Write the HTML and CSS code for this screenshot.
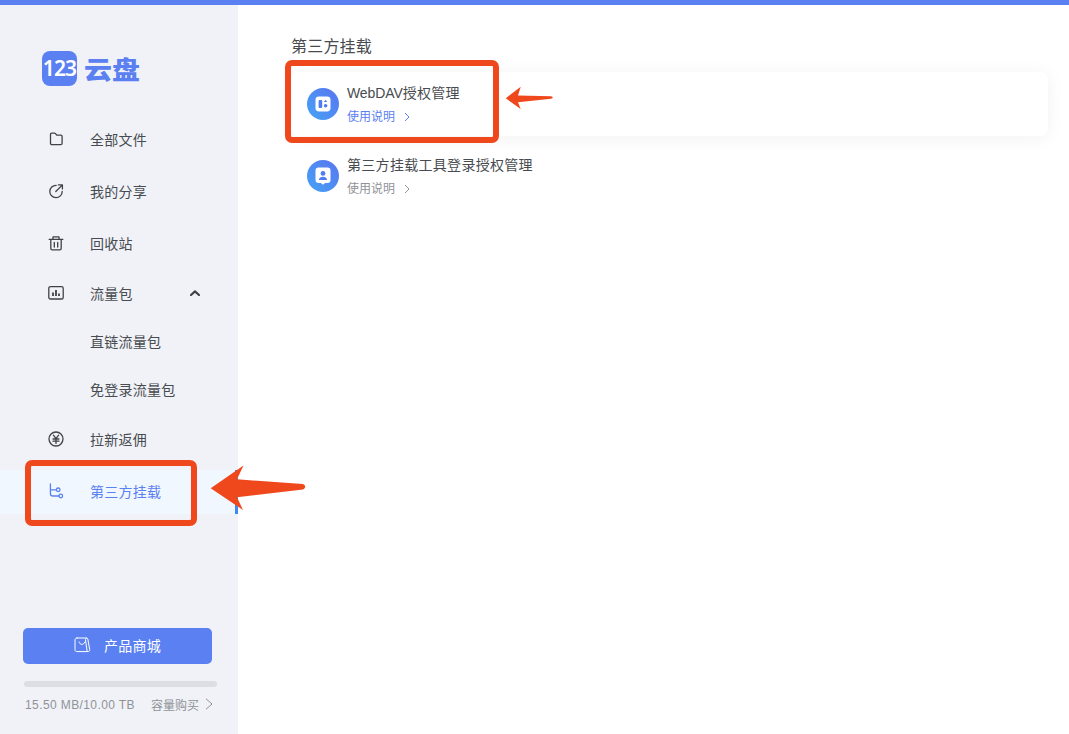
FILE: index.html
```html
<!DOCTYPE html>
<html lang="zh-CN">
<head>
    <meta charset="UTF-8">
    <title>123云盘</title>
    <link rel="stylesheet" href="styles.css">
</head>
<body>
    <div class="top-bar"></div>
    <div class="layout">
        <aside class="sidebar">
            <div class="logo">
                <span class="logo-tile">123</span>
                <span class="logo-name">云盘</span>
            </div>

            <nav class="nav">
                <a class="nav-item">
                    <svg class="nav-icon" viewBox="0 0 16 16"><path d="M2.500 3.400c0-.8.500-1.300 1.300-1.300h2.700c.4 0 .7.200 1 .5l1.200 1.500h4.100c.8 0 1.300.5 1.300 1.300v6.900c0 .8-.5 1.300-1.300 1.300H3.800c-.8 0-1.300-.5-1.300-1.300z"/></svg>
                    <span>全部文件</span>
                </a>
                <a class="nav-item">
                    <svg class="nav-icon" viewBox="0 0 16 16"><path d="M8.200 2.300a6.200 6.200 0 1 0 6 6.200M10.400 1.900h4v4M14.200 2.100L7.800 8.500"/></svg>
                    <span>我的分享</span>
                </a>
                <a class="nav-item">
                    <svg class="nav-icon" viewBox="0 0 16 16"><path d="M1.200 4.400h13.600M5 4.200V1.800h6v2.400M2.800 4.400v9.200c0 .8.500 1.300 1.300 1.300h7.800c.8 0 1.300-.5 1.300-1.300V4.400M6.300 7.400v4.600M9.700 7.400v4.600"/></svg>
                    <span>回收站</span>
                </a>

                <div class="nav-group">
                    <a class="nav-item nav-head">
                        <svg class="nav-icon" viewBox="0 0 16 16"><rect x=".8" y="1.600" width="14.400" height="12.400" rx="1.600"/><path class="nav-bars" d="M5 7.600v3.400M8 5v6M11 8.400v2.600"/></svg>
                        <span>流量包</span>
                        <svg class="nav-caret" viewBox="0 0 10 6"><path d="M1 5l4-3.600L9 5"/></svg>
                    </a>
                    <a class="nav-sub">直链流量包</a>
                    <a class="nav-sub">免登录流量包</a>
                </div>

                <a class="nav-item">
                    <svg class="nav-icon" viewBox="0 0 16 16"><circle cx="8" cy="8" r="7"/><path d="M5.400 4.200L8 7.600l2.600-3.400M5 8h6M5 10.200h6M8 7.600v4.800"/></svg>
                    <span>拉新返佣</span>
                </a>
                <a class="nav-item nav-item-active">
                    <svg class="nav-icon" viewBox="0 0 16 16"><path d="M2.400 .8v9.600c0 1.600 1 2.600 2.600 2.600h6M2.400 6.800h6"/><circle cx="10.200" cy="6.800" r="1.800"/><circle cx="12.800" cy="13" r="1.800"/></svg>
                    <span>第三方挂载</span>
                </a>
            </nav>

            <div class="side-bottom">
                <button class="shop-btn">
                    <svg class="shop-icon" viewBox="0 0 17 16"><path d="M3 1h9.500c.7 0 1.100.4 1.300 1l1.900 10.600c.2 1.200-.5 2-1.600 2H2.800c-1.100 0-1.800-.8-1.800-1.800V3c0-1.200.8-2 2-2zM5 5c.6 1.600 1.700 2.400 2.900 2.400S10.200 6.600 10.800 5M12.500 1c-.8.400-1.100 1.100-1 2l1.700 11.600"/></svg>
                    <span>产品商城</span>
                </button>
                <div class="usage-track"></div>
                <div class="usage-row">
                    <span class="usage-text">15.50 MB/10.00 TB</span>
                    <span class="usage-buy">容量购买</span>
                    <svg class="usage-arrow" viewBox="0 0 8 12"><path d="M1 .8L7 6l-6 5.200"/></svg>
                </div>
            </div>
        </aside>

        <main class="content">
            <h1 class="page-title">第三方挂载</h1>
            <div class="mount-list">
                <div class="mount-card mount-card-active">
                    <div class="mount-icon">
                        <svg viewBox="0 0 18 18"><rect x="1.500" y="1.500" width="15" height="15" rx="3.400" fill="#fff"/><rect x="4.600" y="5" width="3.600" height="8" rx="1" fill="#4f7df0"/><path d="M11.600 4.800l1.700 2.100h-3.400z" fill="#4f7df0"/><circle cx="11.600" cy="10.800" r="1.800" fill="#4f7df0"/></svg>
                    </div>
                    <div class="mount-text">
                        <div class="mount-name"><span class="latin">WebDAV</span>授权管理</div>
                        <div class="mount-help">使用说明<svg class="help-arrow" viewBox="0 0 6 10"><path d="M1 1l4 4-4 4"/></svg></div>
                    </div>
                </div>
                <div class="mount-card">
                    <div class="mount-icon">
                        <svg viewBox="0 0 18 18"><path d="M4.500 .6h9a3 3 0 0 1 3 3v9.400a3 3 0 0 1-3 3h-2.300L9 17.800 6.800 16H4.500a3 3 0 0 1-3-3V3.600a3 3 0 0 1 3-3z" fill="#fff"/><circle cx="9" cy="6.400" r="2.400" fill="#4f7df0"/><path d="M4.800 13c.4-2.200 2.200-3.200 4.200-3.200s3.800 1 4.200 3.200z" fill="#4f7df0"/></svg>
                    </div>
                    <div class="mount-text">
                        <div class="mount-name">第三方挂载工具登录授权管理</div>
                        <div class="mount-help">使用说明<svg class="help-arrow" viewBox="0 0 6 10"><path d="M1 1l4 4-4 4"/></svg></div>
                    </div>
                </div>
            </div>
        </main>
    </div>

    <!-- red markup drawn on top of the screenshot -->
    <div class="mark-box mark-box-card"></div>
    <div class="mark-box mark-box-nav"></div>
    <svg class="mark-arrows" viewBox="0 0 1069 734">
        <path d="M505.700 98.300L520.700 86.700L518 95.500L551 96.300Q554.500 97.300 551 98.700L518 102.300L520.700 109z"/>
        <path d="M210.700 488.300L243.500 465.500L237 479.300L303 484Q307.500 486.500 303 489.500L237 497.300L243 510z"/>
    </svg>
</body>
</html>
```
FILE: styles.css
```css
* {
    box-sizing: border-box;
}

html, body {
    height: 100%;
}

body {
    margin: 0;
    display: flex;
    flex-direction: column;
    font-family: "Liberation Sans", "Noto Sans CJK SC", sans-serif;
    color: #484b50;
    background: #fff;
    overflow: hidden;
}

.top-bar {
    height: 5px;
    flex: none;
    background: #5a80f2;
}

.layout {
    flex: 1;
    display: flex;
    min-height: 0;
}

.sidebar {
    width: 238px;
    flex: none;
    display: flex;
    flex-direction: column;
    background: #f0f2f7;
}

.logo {
    display: flex;
    align-items: center;
    gap: 7px;
    margin: 46px 0 0 42px;
    height: 34px;
}

.logo-tile {
    width: 35px;
    height: 35px;
    border-radius: 8px;
    background: #5a80f2;
    color: #fff;
    font-family: "Noto Sans", sans-serif;
    font-size: 21px;
    font-weight: 600;
    line-height: 34px;
    text-align: center;
    letter-spacing: -0.8px;
}

.logo-name {
    font-family: "Noto Sans CJK SC", sans-serif;
    font-size: 28px;
    font-weight: 900;
    line-height: 34px;
    color: #5a80f2;
    transform: scaleY(0.9);
}

.nav {
    margin-top: 33px;
}

.nav-item {
    display: flex;
    align-items: center;
    height: 44px;
    padding-left: 48px;
    padding-bottom: 2px;
    margin-bottom: 8px;
    font-size: 14px;
    letter-spacing: 0.25px;
}

.nav-icon {
    width: 16px;
    height: 16px;
    margin-right: 26px;
    flex: none;
    fill: none;
    stroke: #3f4246;
    stroke-width: 1.300;
    stroke-linecap: round;
    stroke-linejoin: round;
}

.nav-bars {
    stroke-width: 1.800;
    stroke-linecap: butt;
}

.nav-group {
    margin-bottom: 4px;
}

.nav-head {
    height: 40px;
    margin-bottom: 4px;
}

.nav-caret {
    width: 10px;
    height: 6px;
    margin-left: 57px;
    fill: none;
    stroke: #3f4246;
    stroke-width: 2.200;
    stroke-linecap: round;
    stroke-linejoin: round;
}

.nav-sub {
    display: flex;
    align-items: center;
    height: 48px;
    padding-left: 90px;
    padding-bottom: 2px;
    font-size: 14px;
    letter-spacing: 0.25px;
}

.nav-item-active {
    margin-bottom: 0;
    color: #5a80f2;
    background: #f0f7ff;
    border-right: 3px solid #3d8af0;
}

.nav-item-active .nav-icon {
    stroke: #5a80f2;
}

.side-bottom {
    margin-top: auto;
    padding: 0 21px 20px 23px;
}

.shop-btn {
    display: flex;
    align-items: center;
    justify-content: center;
    width: 189px;
    height: 36px;
    padding: 0 0 2px;
    border: none;
    border-radius: 5px;
    background: #5a80f2;
    color: #fff;
    font-family: inherit;
    font-size: 14px;
    letter-spacing: 0.25px;
}

.shop-icon {
    width: 17px;
    height: 16px;
    margin-right: 13px;
    fill: none;
    stroke: #fff;
    stroke-width: 1;
    stroke-linejoin: round;
    stroke-linecap: round;
}

.usage-track {
    height: 6px;
    margin: 17px 0 0 1px;
    border-radius: 3px;
    background: #dcdee3;
}

.usage-row {
    display: flex;
    align-items: center;
    height: 18px;
    margin-top: 9px;
    padding-left: 2px;
    font-size: 12px;
    color: #8f9298;
}

.usage-text {
    letter-spacing: 0.4px;
}

.usage-buy {
    margin-left: 16px;
    padding-bottom: 2px;
}

.usage-arrow {
    width: 8px;
    height: 12px;
    margin: -3px 0 0 6px;
    fill: none;
    stroke: #8f9298;
    stroke-width: 1;
}

.content {
    flex: 1;
    padding: 32px 21px 0 53px;
}

.page-title {
    margin: 0;
    font-size: 16px;
    font-weight: 400;
    line-height: 20px;
    letter-spacing: 0.2px;
}

.mount-list {
    display: flex;
    flex-direction: column;
    gap: 8px;
    margin-top: 15px;
}

.mount-card {
    display: flex;
    align-items: center;
    gap: 8px;
    height: 64px;
    padding-left: 16px;
    border-radius: 8px;
}

.mount-card-active {
    box-shadow: 0 2px 18px rgba(30, 40, 70, 0.06);
}

.mount-icon {
    width: 32px;
    height: 32px;
    flex: none;
    display: flex;
    align-items: center;
    justify-content: center;
    border-radius: 50%;
    background: linear-gradient(45deg, #45a4f6, #5a74f0);
}

.mount-icon svg {
    width: 18px;
    height: 18px;
}

.mount-name {
    font-size: 14px;
    line-height: 20px;
    letter-spacing: 0.3px;
}

.latin {
    letter-spacing: -0.1px;
}

.mount-help {
    display: flex;
    align-items: center;
    margin-top: 6px;
    font-size: 12px;
    line-height: 16px;
    color: #8f9298;
}

.mount-card-active .mount-help {
    color: #5a80f2;
}

.help-arrow {
    width: 6px;
    height: 10px;
    margin-left: 9px;
    fill: none;
    stroke: currentColor;
    stroke-width: 1;
}

.mark-box {
    position: absolute;
    border: 6px solid #f0481d;
    border-radius: 7px;
}

.mark-box-card {
    left: 285px;
    top: 60px;
    width: 214px;
    height: 83px;
}

.mark-box-nav {
    left: 25px;
    top: 460px;
    width: 172px;
    height: 66px;
}

.mark-arrows {
    position: absolute;
    left: 0;
    top: 0;
    width: 1069px;
    height: 734px;
    pointer-events: none;
    fill: #f0481d;
}
```
